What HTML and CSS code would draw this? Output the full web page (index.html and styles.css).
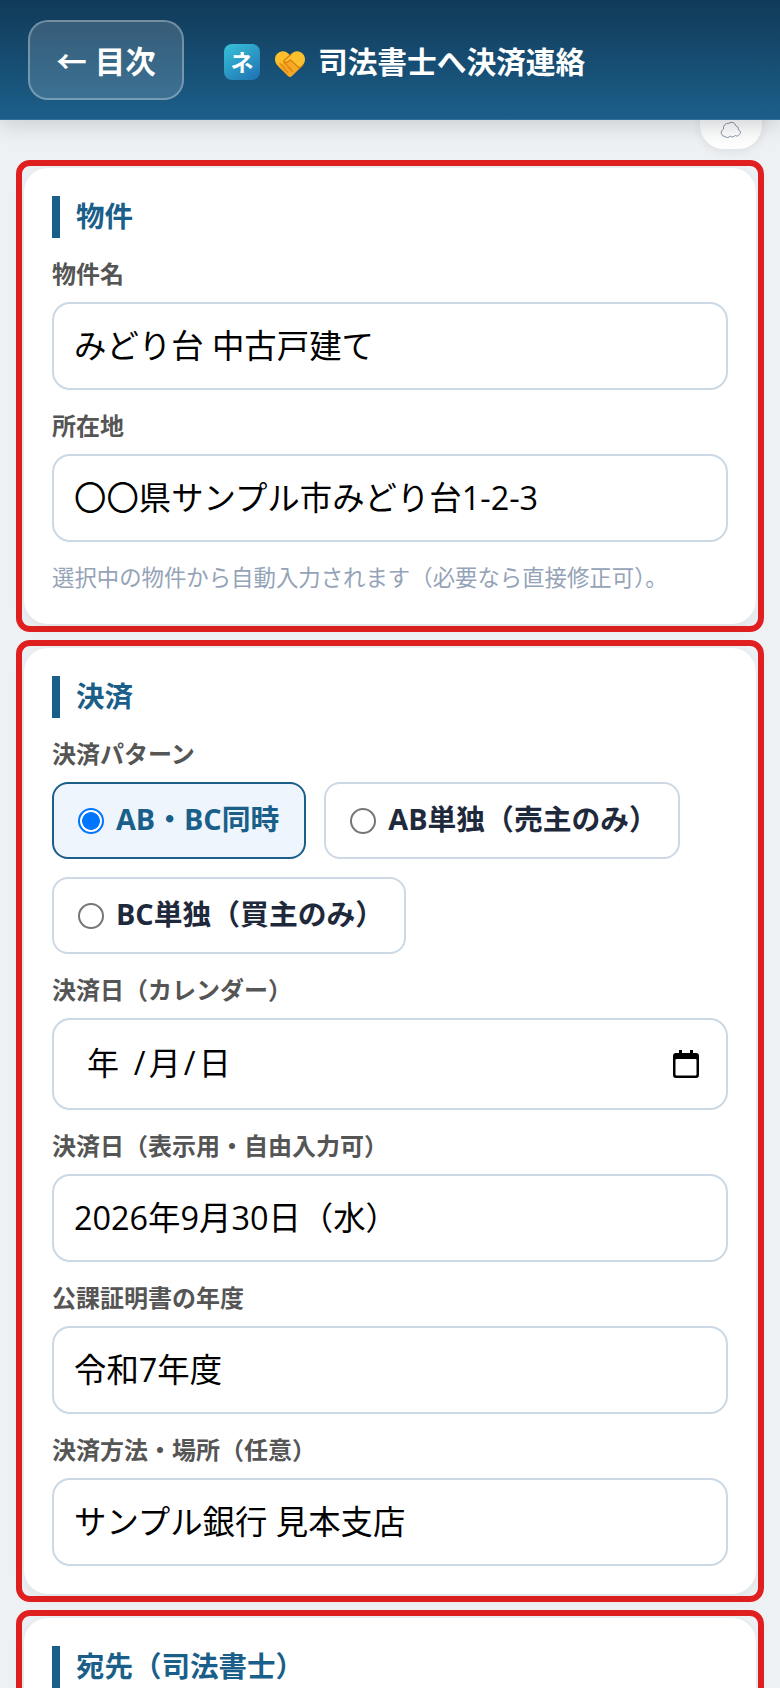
FILE: index.html
```html
<!DOCTYPE html>
<html lang="ja">
<head>
    <meta charset="UTF-8">
    <meta name="viewport" content="width=device-width, initial-scale=1.0">
    <title>司法書士へ決済連絡</title>
    <link rel="stylesheet" href="styles.css">
</head>
<body>
    <header class="top-bar">
        <button class="back-btn">← 目次</button>
        <div class="title-group">
            <div class="app-logo">ネ</div>
            <svg class="shake-icon" viewBox="0 0 30 26" aria-hidden="true">
                <path d="M15 4.500C12.500 1.200 9.500 0 6.800 0.400 2.600 1 0 4.200 0 8.200c0 2.400 1 4.600 2.800 6.600L13 24.800c1.200 1.200 2.800 1.200 4 0l10.200-10C29 12.800 30 10.600 30 8.200 30 4.200 27.400 1 23.200 0.400 20.500 0 17.500 1.200 15 4.500z" fill="#fcc02e"/>
                <path d="M2.800 14.800L13 24.800c1.200 1.200 2.800 1.200 4 0l7.500-7.400-9.500-8.900-5 3z" fill="#f9a825"/>
                <path d="M16 3.600L9.600 8.800c-1.200 1.100-.2 3 1.500 2.700 1.500-.3 3-1.300 4.500-2.600l8.800 8.400 3.400-3.200" fill="none" stroke="#d97f0e" stroke-width="1.300" stroke-linecap="round" stroke-linejoin="round"/>
                <g stroke="#e08a10" stroke-width="1.400" stroke-linecap="round">
                    <path d="M5 12.500l4.500 4.500"/>
                    <path d="M8.500 10.800l8 8"/>
                    <path d="M9 17.500l3.800 3.800"/>
                    <path d="M12.500 15.500l5.200 5.200"/>
                </g>
            </svg>
            <h1 class="page-title">司法書士へ決済連絡</h1>
        </div>
    </header>

    <div class="cloud-tab">
        <svg viewBox="0 0 22 17" aria-hidden="true">
            <path d="M5 15.500a3.800 3.800 0 0 1-1.500-7.300A5 5 0 0 1 9 2.200a4.300 4.300 0 0 1 6.800 2.600 3.400 3.400 0 0 1 2.600 4 2.700 2.700 0 0 1 1 4.700 2.800 2.800 0 0 1-4.200.900 3.300 3.300 0 0 1-5 .600A3.300 3.300 0 0 1 5 15.500z" fill="none" stroke="#8593a3" stroke-width="1"/>
        </svg>
    </div>

    <main class="content">
        <div class="mark">
            <section class="card">
                <h2 class="card-title">物件</h2>
                <div class="field">
                    <label class="field-label">物件名</label>
                    <input class="text-input" type="text" value="みどり台 中古戸建て">
                </div>
                <div class="field">
                    <label class="field-label">所在地</label>
                    <input class="text-input" type="text" value="〇〇県サンプル市みどり台1-2-3">
                </div>
                <p class="hint">選択中の物件から自動入力されます（必要なら直接修正可）。</p>
            </section>
        </div>

        <div class="mark">
            <section class="card">
                <h2 class="card-title">決済</h2>
                <div class="field">
                    <label class="field-label">決済パターン</label>
                    <div class="radio-group">
                        <label class="radio-pill selected"><input type="radio" name="pattern" checked>AB・BC同時</label>
                        <label class="radio-pill"><input type="radio" name="pattern">AB単独（売主のみ）</label>
                        <label class="radio-pill"><input type="radio" name="pattern">BC単独（買主のみ）</label>
                    </div>
                </div>
                <div class="field">
                    <label class="field-label">決済日（カレンダー）</label>
                    <div class="date-input">
                        <span>年 /月/日</span>
                        <svg class="calendar-icon" viewBox="0 0 26 28" aria-hidden="true">
                            <path d="M6 0h3v3h8V0h3v3h3a3 3 0 0 1 3 3v19a3 3 0 0 1-3 3H3a3 3 0 0 1-3-3V6a3 3 0 0 1 3-3h3z" fill="#000"/>
                            <rect x="2.500" y="9" width="21" height="16.500" rx="1" fill="#fff"/>
                        </svg>
                    </div>
                </div>
                <div class="field">
                    <label class="field-label">決済日（表示用・自由入力可）</label>
                    <input class="text-input" type="text" value="2026年9月30日（水）">
                </div>
                <div class="field">
                    <label class="field-label">公課証明書の年度</label>
                    <input class="text-input" type="text" value="令和7年度">
                </div>
                <div class="field last">
                    <label class="field-label">決済方法・場所（任意）</label>
                    <input class="text-input" type="text" value="サンプル銀行 見本支店">
                </div>
            </section>
        </div>

        <div class="mark">
            <section class="card tall">
                <h2 class="card-title">宛先（司法書士）</h2>
            </section>
        </div>
    </main>
</body>
</html>
```

FILE: styles.css
```css
html, body {
    height: 1688px;
    overflow: hidden;
}

body {
    margin: 0;
    background: #edf1f4;
    font-family: "Open Sans", "Noto Sans CJK JP", sans-serif;
    line-height: 1.6;
    position: relative;
}

.top-bar {
    height: 120px;
    box-sizing: border-box;
    display: flex;
    align-items: center;
    padding: 0 28px;
    background: linear-gradient(180deg, #113a58, #1c5f8a);
    border-bottom: 1px solid #2f6f98;
    box-shadow: 0 6px 20px rgba(0,0,0,0.14);
    position: relative;
    z-index: 2;
}

.back-btn {
    height: 80px;
    width: 156px;
    margin-right: 40px;
    background: rgba(255,255,255,0.15);
    border: 2px solid rgba(255,255,255,0.3);
    border-radius: 20px;
    color: #fff;
    font-family: inherit;
    font-size: 30.500px;
    font-weight: 700;
    padding: 0;
}

.title-group {
    display: flex;
    align-items: center;
    margin-top: 5px;
}

.app-logo {
    width: 36px;
    height: 36px;
    margin-right: 14px;
    border-radius: 8px;
    background: linear-gradient(145deg, #38c3d9, #1f6fb2);
    color: #fff;
    font-size: 23px;
    font-weight: 700;
    line-height: 36px;
    text-align: center;
}

.shake-icon {
    width: 30px;
    height: 26px;
    margin: 4px 14px 0 1px;
}

.page-title {
    margin: 0 0 0 -1px;
    color: #fff;
    font-size: 29.700px;
    font-weight: 700;
    line-height: 48px;
}

.cloud-tab {
    position: absolute;
    top: 100px;
    left: 700px;
    width: 62px;
    height: 49px;
    border-radius: 0 0 24px 24px;
    background: linear-gradient(180deg, #f3f5f7, #fff);
    box-shadow: 0 3px 10px rgba(0,0,0,0.07);
    z-index: 1;
}

.cloud-tab svg {
    position: absolute;
    top: 21px;
    left: 20px;
    width: 22px;
    height: 17px;
}

.content {
    padding: 40px 16px 0;
    display: flex;
    flex-direction: column;
    gap: 8px;
}

.mark {
    border: 6px solid #e02020;
    border-radius: 14px;
    padding: 2px;
}

.card {
    background: #fff;
    border-radius: 24px;
    padding: 28px;
    box-shadow: 0 3px 12px rgba(0,0,0,0.07);
}

.card.tall {
    min-height: 300px;
}

.card-title {
    margin: 0 0 18px;
    padding: 0 0 2px 16px;
    border-left: 8px solid #1a5f8a;
    color: #1a5f8a;
    font-size: 28.500px;
    font-weight: 700;
    line-height: 40px;
}

.field {
    margin-bottom: 18px;
}

.field.last {
    margin-bottom: 0;
}

.field-label {
    display: block;
    margin-bottom: 10px;
    color: #555;
    font-size: 24px;
    font-weight: 700;
    line-height: 36px;
}

.text-input {
    display: block;
    width: 100%;
    height: 88px;
    box-sizing: border-box;
    padding: 0 20px 6px;
    border: 2px solid #cdd8e5;
    border-radius: 18px;
    background: #fff;
    color: #000;
    font-family: inherit;
    font-size: 32.400px;
}

.date-input {
    height: 92px;
    box-sizing: border-box;
    display: flex;
    align-items: center;
    justify-content: space-between;
    padding: 0 27px 0 33px;
    border: 2px solid #cdd8e5;
    border-radius: 18px;
    color: #000;
    font-size: 32px;
    letter-spacing: 3.200px;
}

.date-input span {
    padding-bottom: 3px;
}

.calendar-icon {
    width: 26px;
    height: 28px;
}

.radio-group {
    display: flex;
    flex-wrap: wrap;
    gap: 18px;
}

.radio-pill {
    height: 77px;
    box-sizing: border-box;
    display: flex;
    align-items: center;
    gap: 12px;
    padding: 0 20px 3px 24px;
    border: 2px solid #cdd8e5;
    border-radius: 16px;
    color: #1e293b;
    font-size: 28.800px;
    font-weight: 700;
}

.radio-pill input {
    appearance: none;
    box-sizing: border-box;
    width: 26px;
    height: 26px;
    margin: 3px 0 0;
    border: 2px solid #767676;
    border-radius: 50%;
    background: #fff;
}

.radio-pill input:checked {
    border-color: #0075ff;
    background: radial-gradient(circle, #0075ff 0 8.500px, #fff 9.200px);
}

.radio-pill.selected {
    padding-right: 25px;
    background: #eef5fc;
    border-color: #1a5f8a;
    color: #1a5f8a;
}

.hint {
    margin: 0;
    color: #94a3b8;
    font-size: 22.400px;
    line-height: 36px;
}
```
